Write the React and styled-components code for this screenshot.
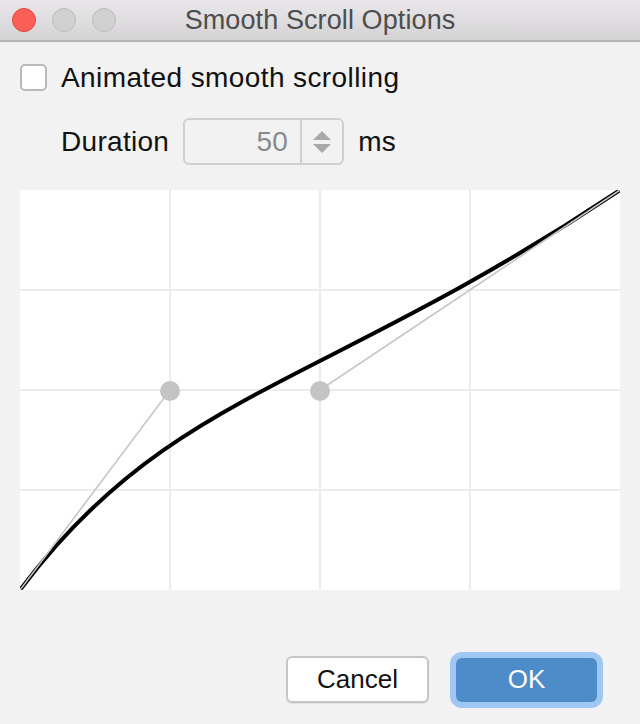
import styled, { createGlobalStyle } from "styled-components";

const GlobalStyle = createGlobalStyle`
  html, body {
    margin: 0;
    padding: 0;
    background: #f2f2f2;
  }
  * {
    box-sizing: border-box;
  }
`;

const Window = styled.div`
  width: 640px;
  height: 724px;
  display: flex;
  flex-direction: column;
  background: #f2f2f2;
  font-family: "Liberation Sans", Arial, sans-serif;
  color: #111;
  overflow: hidden;
`;

const TitleBar = styled.div`
  position: relative;
  height: 42px;
  flex-shrink: 0;
  display: flex;
  align-items: center;
  justify-content: center;
  background: linear-gradient(#e9e7e9, #d4d3d4);
  border-bottom: 2px solid #b5b5b5;
`;

const Lights = styled.div`
  position: absolute;
  left: 12px;
  top: 8px;
  display: flex;
  gap: 16px;
`;

const Light = styled.span`
  width: 24px;
  height: 24px;
  border-radius: 50%;
  background: ${(p) => (p.$red ? "#fc5f57" : "#d2d1d2")};
  border: 1px solid ${(p) => (p.$red ? "#e0463f" : "#bcbbbc")};
`;

const Title = styled.div`
  font-size: 27px;
  color: #4d4d4d;
  letter-spacing: 0.1px;
`;

const Body = styled.div`
  display: flex;
  flex-direction: column;
  padding: 22px 20px 0 20px;
`;

const CheckRow = styled.label`
  display: flex;
  align-items: center;
  gap: 14px;
  height: 27px;
  font-size: 28px;
  letter-spacing: 0.4px;
`;

const CheckBox = styled.span`
  width: 27px;
  height: 27px;
  border-radius: 5px;
  background: #fff;
  border: 2px solid #b9b9b9;
`;

const DurationRow = styled.div`
  display: flex;
  align-items: center;
  gap: 14px;
  margin-top: 27px;
  padding-left: 41px;
  font-size: 28px;
  letter-spacing: 0.3px;
`;

const Spinner = styled.div`
  display: flex;
  width: 161px;
  height: 47px;
  border: 2px solid #d0d0d0;
  border-radius: 6px;
  background: #f2f2f2;
`;

const SpinValue = styled.div`
  width: 117px;
  display: flex;
  align-items: center;
  justify-content: flex-end;
  padding-right: 12px;
  color: #8a8a8a;
  border-right: 2px solid #d0d0d0;
`;

const SpinArrows = styled.div`
  flex: 1;
  display: flex;
  flex-direction: column;
  align-items: center;
  justify-content: center;
  gap: 4px;
`;

const Chart = styled.svg`
  display: block;
  margin-top: 25px;
  background: #fff;
`;

const Footer = styled.div`
  display: flex;
  justify-content: flex-end;
  align-items: center;
  gap: 27px;
  margin-top: 66px;
  padding-right: 23px;
`;

const Button = styled.button`
  font-family: "Liberation Sans", Arial, sans-serif;
  font-size: 26px;
  width: ${(p) => (p.$primary ? "141px" : "143px")};
  height: ${(p) => (p.$primary ? "44px" : "47px")};
  border-radius: 6px;
  color: ${(p) => (p.$primary ? "#fff" : "#111")};
  background: ${(p) => (p.$primary ? "#4d8bc9" : "#fff")};
  border: ${(p) => (p.$primary ? "none" : "2px solid #c6c6c6")};
  box-shadow: ${(p) => (p.$primary ? "0 0 0 6px #9ec7f3" : "0 1px 1px rgba(0,0,0,0.08)")};
  padding: 0;
`;

const gridX = [150, 300, 450];
const gridY = [100, 200, 300];

export default function App() {
  return (
    <>
      <GlobalStyle />
      <Window>
        <TitleBar>
          <Lights>
            <Light $red />
            <Light />
            <Light />
          </Lights>
          <Title>Smooth Scroll Options</Title>
        </TitleBar>
        <Body>
          <CheckRow>
            <CheckBox />
            Animated smooth scrolling
          </CheckRow>
          <DurationRow>
            <span>Duration</span>
            <Spinner>
              <SpinValue>50</SpinValue>
              <SpinArrows>
                <svg width="18" height="9" viewBox="0 0 18 9">
                  <path d="M9 0 L18 9 L0 9 Z" fill="#a9a9a9" />
                </svg>
                <svg width="18" height="9" viewBox="0 0 18 9">
                  <path d="M0 0 L18 0 L9 9 Z" fill="#a9a9a9" />
                </svg>
              </SpinArrows>
            </Spinner>
            <span>ms</span>
          </DurationRow>
          <Chart width="600" height="400" viewBox="0 0 600 400">
            {gridX.map((x) => (
              <line key={x} x1={x} y1="0" x2={x} y2="400" stroke="#ececec" strokeWidth="2" />
            ))}
            {gridY.map((y) => (
              <line key={y} x1="0" y1={y} x2="600" y2={y} stroke="#ececec" strokeWidth="2" />
            ))}
            <path d="M0 400 C150 200 300 200 600 0" fill="none" stroke="#000" strokeWidth="4" />
            <line x1="0" y1="400" x2="150" y2="200" stroke="#c6c6c6" strokeWidth="1.6" />
            <line x1="300" y1="200" x2="600" y2="0" stroke="#c6c6c6" strokeWidth="1.6" />
            <circle cx="150" cy="201" r="10" fill="#c4c4c4" />
            <circle cx="300" cy="201" r="10" fill="#c4c4c4" />
          </Chart>
          <Footer>
            <Button>Cancel</Button>
            <Button $primary>OK</Button>
          </Footer>
        </Body>
      </Window>
    </>
  );
}
